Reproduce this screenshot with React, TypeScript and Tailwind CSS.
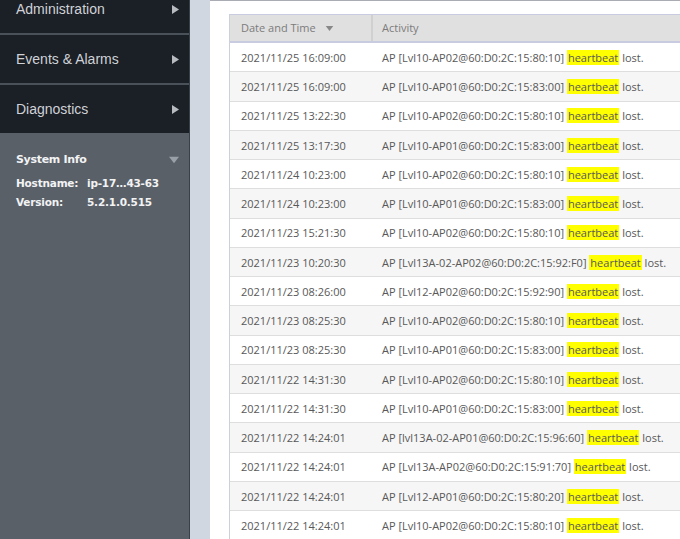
import React from 'react';

const rows: [string, string][] = [
  ['2021/11/25 16:09:00', 'AP [Lvl10-AP02@60:D0:2C:15:80:10]'],
  ['2021/11/25 16:09:00', 'AP [Lvl10-AP01@60:D0:2C:15:83:00]'],
  ['2021/11/25 13:22:30', 'AP [Lvl10-AP02@60:D0:2C:15:80:10]'],
  ['2021/11/25 13:17:30', 'AP [Lvl10-AP01@60:D0:2C:15:83:00]'],
  ['2021/11/24 10:23:00', 'AP [Lvl10-AP02@60:D0:2C:15:80:10]'],
  ['2021/11/24 10:23:00', 'AP [Lvl10-AP01@60:D0:2C:15:83:00]'],
  ['2021/11/23 15:21:30', 'AP [Lvl10-AP02@60:D0:2C:15:80:10]'],
  ['2021/11/23 10:20:30', 'AP [Lvl13A-02-AP02@60:D0:2C:15:92:F0]'],
  ['2021/11/23 08:26:00', 'AP [Lvl12-AP02@60:D0:2C:15:92:90]'],
  ['2021/11/23 08:25:30', 'AP [Lvl10-AP02@60:D0:2C:15:80:10]'],
  ['2021/11/23 08:25:30', 'AP [Lvl10-AP01@60:D0:2C:15:83:00]'],
  ['2021/11/22 14:31:30', 'AP [Lvl10-AP02@60:D0:2C:15:80:10]'],
  ['2021/11/22 14:31:30', 'AP [Lvl10-AP01@60:D0:2C:15:83:00]'],
  ['2021/11/22 14:24:01', 'AP [lvl13A-02-AP01@60:D0:2C:15:96:60]'],
  ['2021/11/22 14:24:01', 'AP [Lvl13A-AP02@60:D0:2C:15:91:70]'],
  ['2021/11/22 14:24:01', 'AP [Lvl12-AP01@60:D0:2C:15:80:20]'],
  ['2021/11/22 14:24:01', 'AP [Lvl10-AP02@60:D0:2C:15:80:10]'],
];

const RightArrow = () => (
  <svg width="7" height="9" viewBox="0 0 7 9" className="fill-[#b8bcc1]">
    <path d="M0 0 L7 4.5 L0 9 Z" />
  </svg>
);

const DownArrow: React.FC<{ className?: string; w?: number; h?: number }> = ({ className, w = 9, h = 6 }) => (
  <svg width={w} height={h} viewBox="0 0 9 6" className={className}>
    <path d="M0 0 L9 0 L4.5 6 Z" />
  </svg>
);

const MenuItem: React.FC<{ label: string; className?: string }> = ({ label, className }) => (
  <div className={`flex items-center justify-between pl-4 pr-[10px] h-[48px] box-content ${className ?? ''}`}>
    <span className="text-[14px] text-[#cfd2d6] font-['Liberation_Sans',sans-serif]">{label}</span>
    <RightArrow />
  </div>
);

export default function App() {
  return (
    <div className="flex w-[680px] h-[539px] overflow-hidden bg-white">
      <aside className="w-[190px] shrink-0 flex flex-col bg-[#1b1f26] border-r border-[#3a4048]">
        <div className="mt-[-15px]">
          <MenuItem label="Administration" className="border-b-2 border-[#4b5159]" />
          <MenuItem label="Events & Alarms" className="border-b-2 border-[#4b5159]" />
          <MenuItem label="Diagnostics" />
        </div>
        <div className="flex-1 bg-[#5a6068] px-4 pt-[19px] font-['DejaVu_Sans',sans-serif] text-[#f2f3f4]">
          <div className="flex items-center justify-between">
            <span className="text-[11px] font-bold tracking-[-0.3px]">System Info</span>
            <DownArrow className="fill-[#9aa0a7] mr-[-6px]" w={10} h={8} />
          </div>
          <div className="mt-[5px] text-[10.5px] font-bold tracking-[-0.2px] leading-[19px]">
            <div className="flex"><span className="w-[71px]">Hostname:</span><span>ip-17…43-63</span></div>
            <div className="flex"><span className="w-[71px]">Version:</span><span>5.2.1.0.515</span></div>
          </div>
        </div>
      </aside>
      <div className="w-[20px] shrink-0 bg-[#d0d7e0]" />
      <main className="flex-1 border-t border-[#a9adb3] pl-[19px] pt-[13px] font-['Open_Sans',sans-serif] text-[11px] text-[#585858]">
        <div className="border-l border-[#cdd0d6]">
          <div className="flex h-[29px] bg-[#e0e0e0] border-t border-b-2 border-[#c9cbe0] text-[#7c7c7c]">
            <div className="w-[143px] flex items-center pl-[11px] pt-[1px] border-r-2 border-[#d0d0d0]">
              Date and Time
              <DownArrow className="ml-[9px] fill-[#888]" w={9} h={5} />
            </div>
            <div className="flex items-center pl-[9px] pt-[1px]">Activity</div>
          </div>
          {rows.map(([date, act], i) => (
            <div
              key={i}
              className={`flex items-center h-[29.25px] pt-[2px] border-b border-[#dedede] ${i % 2 === 1 ? 'bg-[#f6f6f6]' : 'bg-white'}`}
            >
              <div className="w-[143px] pl-[11px] whitespace-nowrap">{date}</div>
              <div className="pl-[9px] whitespace-nowrap">
                {act} <span className="bg-[#ffff00] px-[1px]">heartbeat</span> lost.
              </div>
            </div>
          ))}
        </div>
      </main>
    </div>
  );
}
